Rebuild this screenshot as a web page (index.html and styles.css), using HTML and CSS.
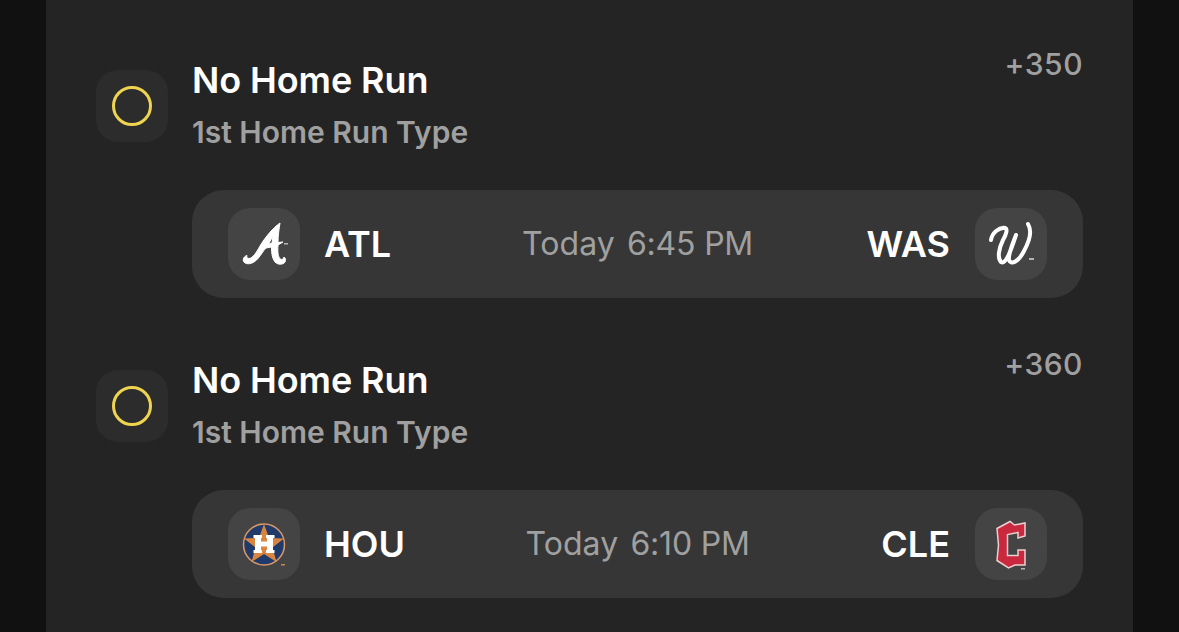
FILE: index.html
```html
<!DOCTYPE html>
<html lang="en">
<head>
<meta charset="utf-8">
<title>Picks</title>
<link rel="stylesheet" href="styles.css">
</head>
<body>
<main class="card">
  <section class="pick">
    <div class="status"><span class="ring"></span></div>
    <div class="body">
      <div class="head">
        <div class="labels">
          <div class="title">No Home Run</div>
          <div class="sub">1st Home Run Type</div>
        </div>
        <div class="odds">+350</div>
      </div>
      <div class="game">
        <div class="team">
          <div class="logo">
            <svg viewBox="0 0 72 72" width="72" height="72">
              <path class="braves" d="M52 15 C45 20 38 28 32 38 C28 45 25 50 21 50.500 C19 50.500 18.500 49 19 47.500 C15 48.500 14 53 17 55 C21 57 26 55 30 50.500 C33 47 35 43 38 40 L43.500 39 C43.500 45 44 50 47 54 C50 57 55 57 57 54 C58 52 57.500 50 56 49 C55.500 51 54 52 52.500 51 C50 49.500 49.500 44 50 37 L55 34 L50 34.500 C50 28 51 21 52 15 Z M45 28 L44 35 L40.500 36 Z"/>
              <path class="mark" d="M56 35h4v1.500h-4z"/>
            </svg>
          </div>
          <span class="code">ATL</span>
        </div>
        <div class="time">Today <span class="clock">6:45 PM</span></div>
        <div class="team away">
          <span class="code">WAS</span>
          <div class="logo">
            <svg viewBox="0 0 72 72" width="72" height="72">
              <path class="script" d="M16 32 C17 25 24 19 30 20 C33 21 31 27 28 32 C24 40 22 50 26 54 C31 57 36 42 41 27 C38 35 33 46 34 52 C36 58 44 53 49 43 C54 34 58 24 53 16"/>
              <path class="mark" d="M54 50h5v2h-5z"/>
            </svg>
          </div>
        </div>
      </div>
    </div>
  </section>
  <section class="pick">
    <div class="status"><span class="ring"></span></div>
    <div class="body">
      <div class="head">
        <div class="labels">
          <div class="title">No Home Run</div>
          <div class="sub">1st Home Run Type</div>
        </div>
        <div class="odds">+360</div>
      </div>
      <div class="game">
        <div class="team">
          <div class="logo">
            <svg viewBox="0 0 72 72" width="72" height="72">
              <circle class="astros-ring" cx="36" cy="36.500" r="20.500"/>
              <path class="astros-star" d="M36 16 L41 30 L56 30.500 L44.500 39.500 L48.500 54 L36 46 L23.500 54 L27.500 39.500 L16 30.500 L31 30 Z"/>
              <path class="astros-h" d="M25.500 27 H34 V30 H33 V33.500 H39 V30 H38 V27 H46.500 V30 H45 V42 H46.500 V45 H38 V42 H39 V38.500 H33 V42 H34 V45 H25.500 V42 H27 V30 H25.500 Z"/>
              <path class="mark-orange" d="M53 56h4v1.500h-4z"/>
            </svg>
          </div>
          <span class="code">HOU</span>
        </div>
        <div class="time">Today <span class="clock">6:10 PM</span></div>
        <div class="team away">
          <span class="code">CLE</span>
          <div class="logo">
            <svg viewBox="0 0 72 72" width="72" height="72">
              <path class="guard" d="M22 20.500 L35 13.500 L39.500 17 L50 15 L50 28 L43 30 L43 24.500 L32.500 26.500 L32.500 47.500 L43 47.500 L43 42 L50 42 L50 57 L40 57 L33.500 60 L22 52.500 L23.500 37 Z"/>
              <path class="mark" d="M46 60h4v1.500h-4z"/>
            </svg>
          </div>
        </div>
      </div>
    </div>
  </section>
</main>
</body>
</html>
```
FILE: styles.css
```css
* { box-sizing: border-box; }

html, body {
  margin: 0;
  height: 632px;
  overflow: hidden;
  background: #111111;
}

body {
  font-family: Inter, "Liberation Sans", sans-serif;
  color: #ffffff;
}

.card {
  margin: 0 46px;
  height: 632px;
  padding: 46px 50px 0;
  background: #242424;
  display: flex;
  flex-direction: column;
  gap: 48px;
}

.pick {
  display: flex;
  gap: 24px;
  align-items: flex-start;
}

.status {
  flex: none;
  width: 72px;
  height: 72px;
  margin-top: 24px;
  border-radius: 22px;
  background: #2c2c2c;
  display: flex;
  align-items: center;
  justify-content: center;
}

.ring {
  width: 40px;
  height: 40px;
  border: 3px solid #eed44f;
  border-radius: 50%;
}

.body {
  flex: 1;
  min-width: 0;
}

.head {
  display: flex;
  justify-content: space-between;
  align-items: flex-start;
  height: 144px;
}

.labels {
  padding-top: 14px;
}

.title {
  font-size: 36px;
  line-height: 40px;
  font-weight: 600;
  letter-spacing: -0.1px;
}

.sub {
  margin-top: 14px;
  font-size: 30px;
  line-height: 36px;
  font-weight: 600;
  color: #a0a0a0;
}

.odds {
  font-size: 30px;
  line-height: 36px;
  font-weight: 500;
  letter-spacing: 0.5px;
  color: #a0a0a0;
}

.game {
  height: 108px;
  padding: 0 36px;
  border-radius: 32px;
  background: #363636;
  display: grid;
  grid-template-columns: 1fr auto 1fr;
  align-items: center;
}

.team {
  display: flex;
  align-items: center;
  gap: 24px;
}

.team.away {
  justify-content: flex-end;
  gap: 25px;
}

.logo {
  flex: none;
  width: 72px;
  height: 72px;
  border-radius: 22px;
  background: #444444;
}

.logo svg {
  display: block;
}

.code {
  font-size: 36px;
  line-height: 40px;
  font-weight: 600;
}

.time {
  font-size: 32px;
  line-height: 40px;
  font-weight: 400;
  letter-spacing: 0.1px;
  color: #a0a0a0;
  white-space: nowrap;
}

.clock {
  margin-left: 3px;
  letter-spacing: -0.2px;
}

.braves { fill: #ffffff; fill-rule: evenodd; stroke: #ffffff; stroke-width: 1; stroke-linejoin: round; }
.mark { fill: #b5b5b5; }
.mark-orange { fill: #c08a52; }
.script { fill: none; stroke: #ffffff; stroke-width: 4; stroke-linecap: round; stroke-linejoin: round; }
.astros-ring { fill: #1f3a6b; stroke: #d9986a; stroke-width: 1.500; }
.astros-star { fill: #d9853f; }
.astros-h { fill: #ffffff; }
.guard { fill: #c9283e; stroke: #ecd0d0; stroke-width: 1.500; stroke-linejoin: miter; }
```
